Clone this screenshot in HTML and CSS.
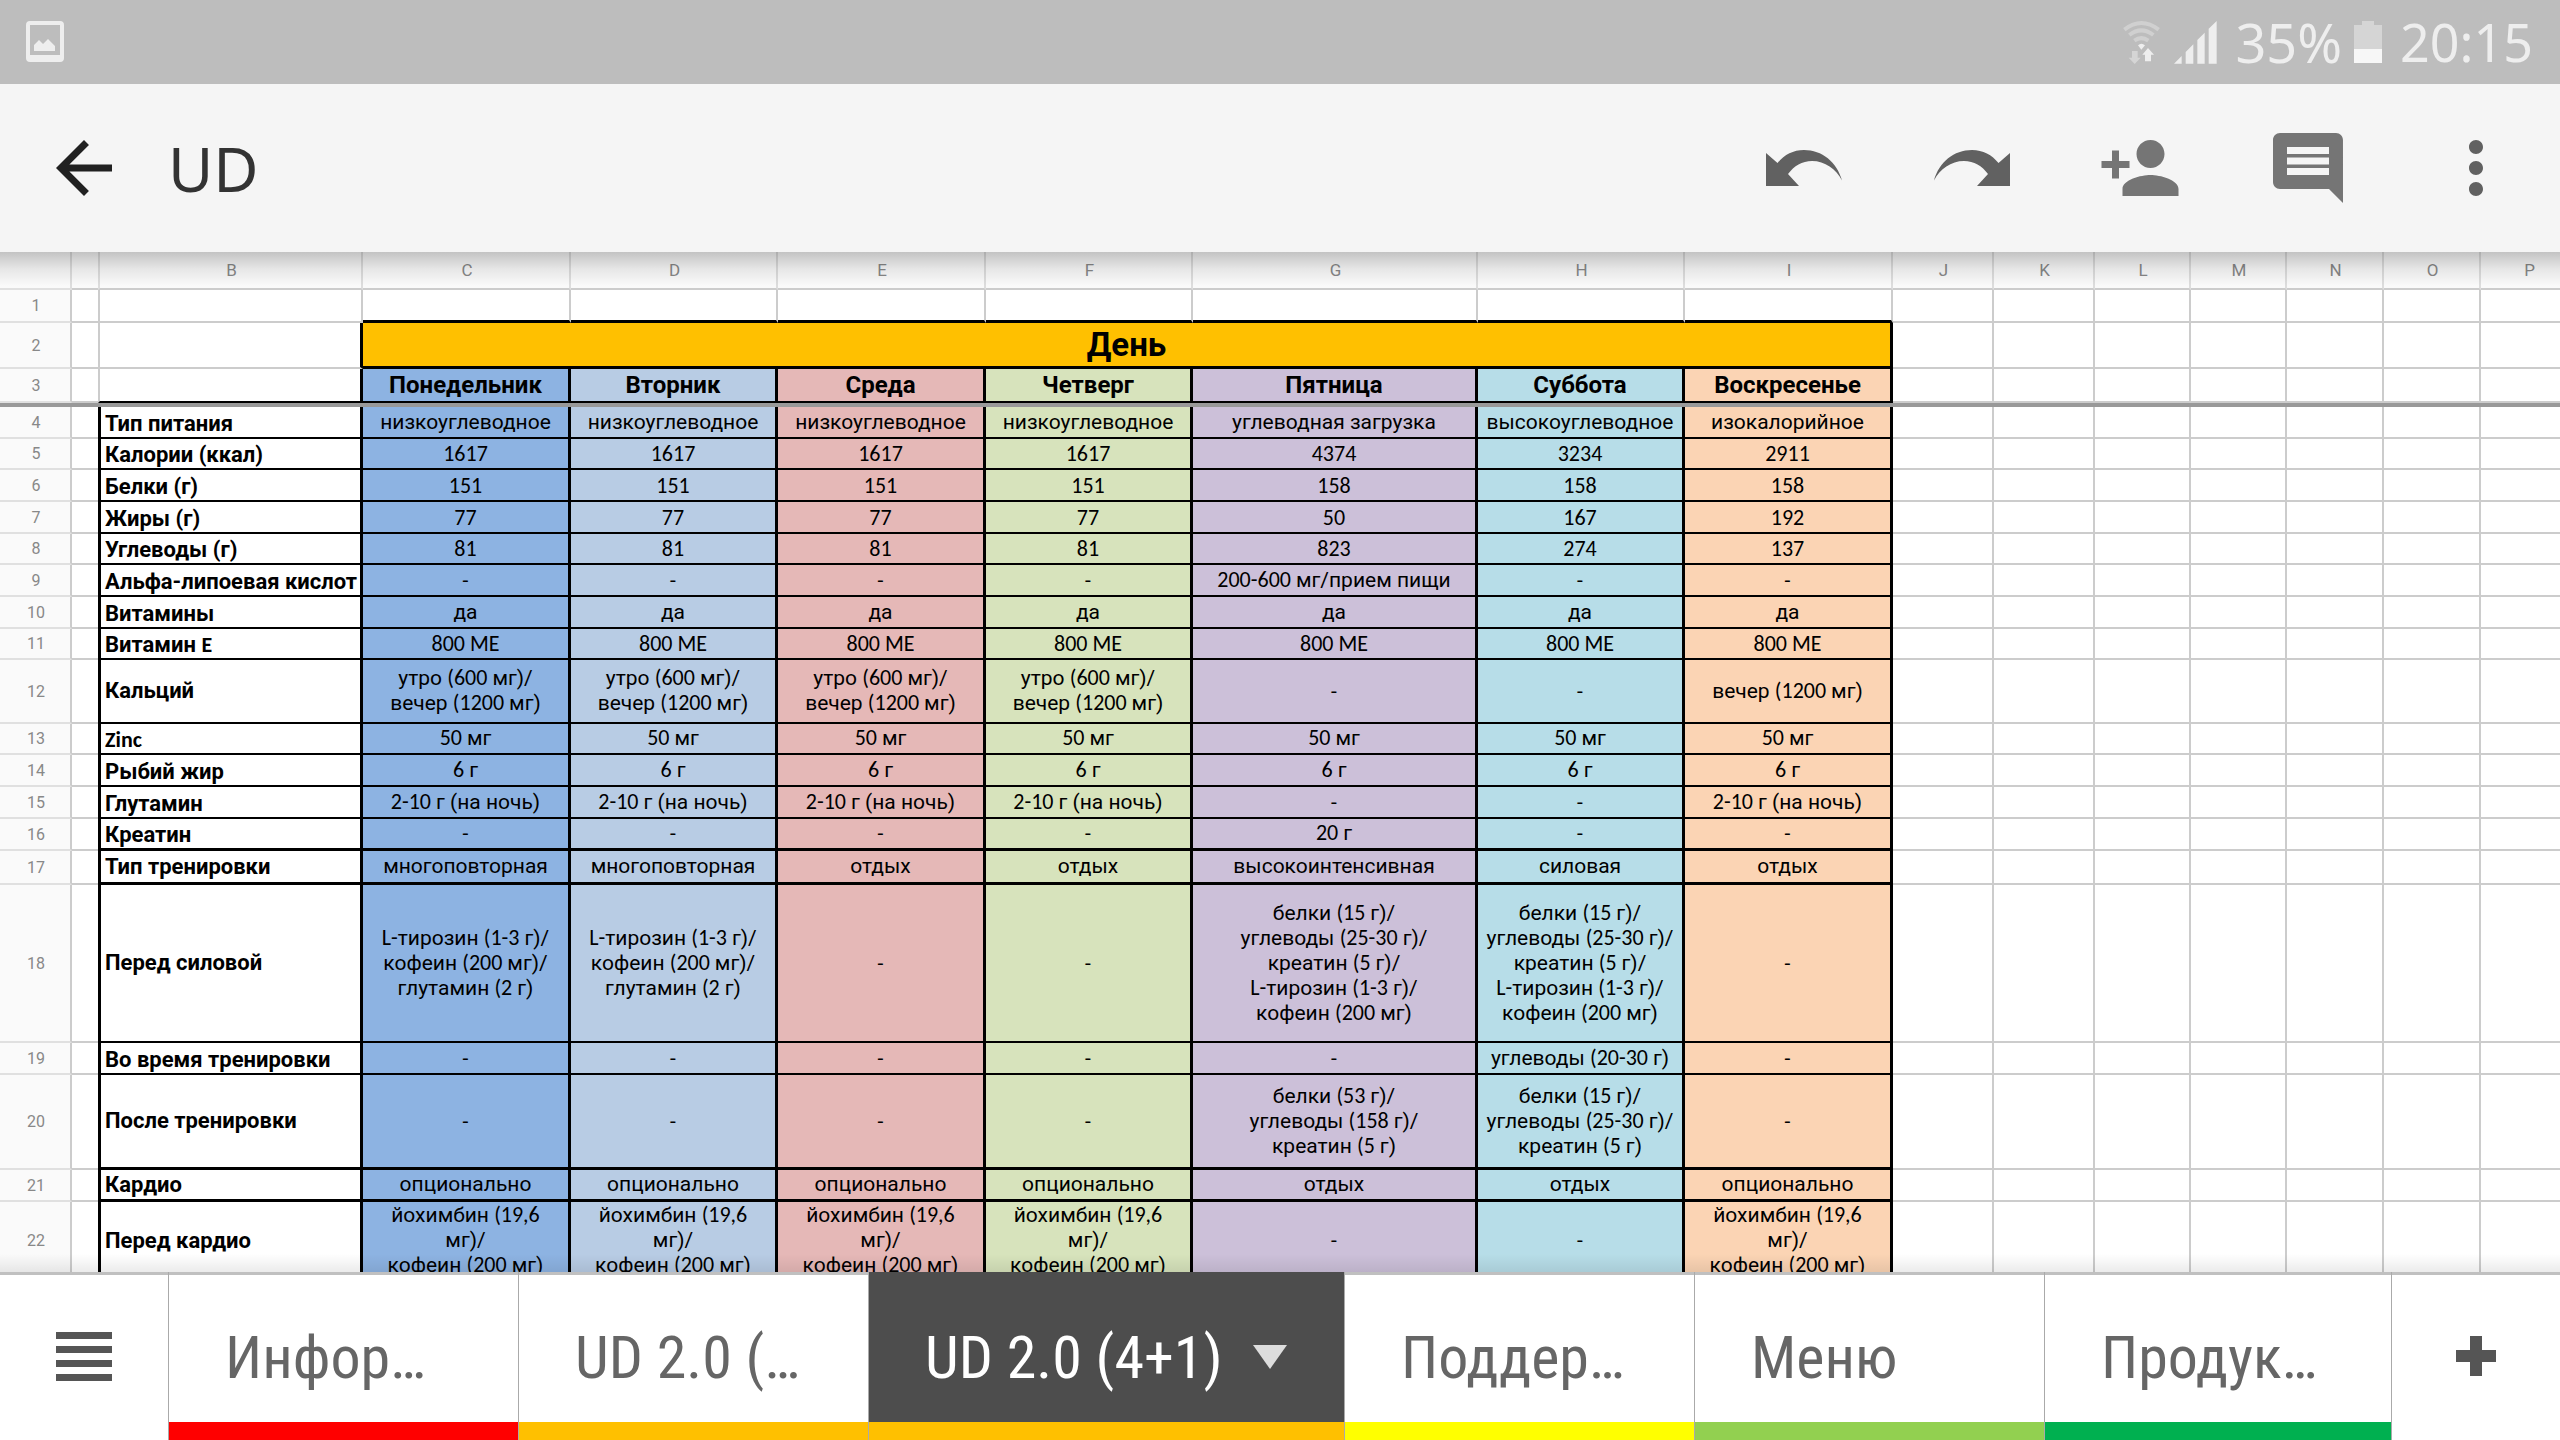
FILE: index.html
```html
<!DOCTYPE html>
<html lang="ru">
<head>
<meta charset="utf-8">
<title>UD</title>
<link rel="stylesheet" href="styles.css">
</head>
<body>
<div class="status">
  <svg class="picture" viewBox="0 0 38 42" width="38" height="42" aria-hidden="true"><path fill-rule="evenodd" d="M4 0H34a4 4 0 0 1 4 4V37a4 4 0 0 1-4 4H4a4 4 0 0 1-4-4V4A4 4 0 0 1 4 0ZM4 4V34H34V4ZM8 30V24L13 19L17 23L22 18L29 25V30Z"/></svg>
  <svg class="wifi" viewBox="126 54 117 138" width="39" height="46" aria-hidden="true">
    <g class="faint-line"><path d="M133 86Q184 46 236 86"/><path d="M148 102Q184 74 220 102"/><path d="M163 119Q184 104 205 119"/></g>
    <path class="faint" d="M156 150H173V170H182L164 189L146 170H156Z"/>
    <path d="M174 133Q184 124 195 133L184 146ZM204 141L222 161H213V181H195V161H187Z"/>
  </svg>
  <svg class="signal" viewBox="283 60 129 129" width="43" height="43" aria-hidden="true"><path d="M283 188L306 165V188ZM318 153L341 130V188H318ZM353 117L375 95V188H353ZM387 83L411 60V188H387Z"/></svg>
  <span class="percent">35%</span>
  <svg class="battery" viewBox="0 0 28 42" width="28" height="42" aria-hidden="true"><path class="faint" d="M0 4H8V0H20V4H28V28H0Z"/><path class="charge" d="M0 28H28V42H0Z"/></svg>
  <time>20:15</time>
</div>
<header class="appbar">
  <button class="icon-btn back" aria-label="Назад"><svg viewBox="0 0 24 24"><path d="M20 11H7.83l5.59-5.59L12 4l-8 8 8 8 1.41-1.41L7.83 13H20v-2z"/></svg></button>
  <h1>UD</h1>
  <button class="icon-btn dark" aria-label="Отменить"><svg viewBox="0 0 84 84"><path d="M4 27L15.500 37C22 29 31 24 42 24C60 24 75 36 80 54.500C74 43 63 35 50 35C40 35 32 40 26 48L37 60H4Z"/></svg></button>
  <button class="icon-btn dark" aria-label="Повторить"><svg viewBox="0 0 84 84"><path d="M80 27L68.500 37C62 29 53 24 42 24C24 24 9 36 4 54.500C10 43 21 35 34 35C44 35 52 40 58 48L47 60H80Z"/></svg></button>
  <button class="icon-btn" aria-label="Добавить пользователя"><svg viewBox="0 0 24 24"><path d="M15 12c2.210 0 4-1.790 4-4s-1.790-4-4-4-4 1.790-4 4 1.790 4 4 4zm-9-2V7H4v3H1v2h3v3h2v-3h3v-2H6zm9 4c-2.670 0-8 1.340-8 4v2h16v-2c0-2.660-5.330-4-8-4z"/></svg></button>
  <button class="icon-btn" aria-label="Комментарии"><svg viewBox="0 0 24 24"><path d="M21.990 4c0-1.100-.890-2-1.990-2H4c-1.100 0-2 .9-2 2v12c0 1.100.9 2 2 2h14l4 4-.010-18zM18 14H6v-2h12v2zm0-3H6V9h12v2zm0-3H6V6h12v2z"/></svg></button>
  <button class="icon-btn dark" aria-label="Ещё"><svg viewBox="0 0 24 24"><path d="M12 8c1.100 0 2-.9 2-2s-.9-2-2-2-2 .9-2 2 .9 2 2 2zm0 2c-1.100 0-2 .9-2 2s.9 2 2 2 2-.9 2-2-.9-2-2-2zm0 6c-1.100 0-2 .9-2 2s.9 2 2 2 2-.9 2-2-.9-2-2-2z"/></svg></button>
</header>
<main class="sheet">
<table>
<colgroup><col class="w-head"><col class="w-a"><col class="w-b"><col class="w-day"><col class="w-day-s"><col class="w-day"><col class="w-day-s"><col class="w-fri"><col class="w-day-s"><col class="w-day"><col class="w-j"><col class="w-j"><col class="w-l"><col class="w-l"><col class="w-n"><col class="w-n"><col class="w-n"></colgroup>
<thead>
<tr class="letters"><th></th><th></th><th>B</th><th>C</th><th>D</th><th>E</th><th>F</th><th>G</th><th>H</th><th>I</th><th>J</th><th>K</th><th>L</th><th>M</th><th>N</th><th>O</th><th>P</th></tr>
<tr class="row-1"><th class="no">1</th><td></td><td></td><td></td><td></td><td></td><td></td><td></td><td></td><td></td><td></td><td></td><td></td><td></td><td></td><td></td><td></td></tr>
<tr class="row-2"><th class="no">2</th><td></td><td class="edge"></td><th class="title" colspan="7">День</th><td></td><td></td><td></td><td></td><td></td><td></td><td></td></tr>
<tr class="row-3 plan"><th class="no">3</th><td></td><td></td><th>Понедельник</th><th>Вторник</th><th>Среда</th><th>Четверг</th><th>Пятница</th><th>Суббота</th><th>Воскресенье</th><td></td><td></td><td></td><td></td><td></td><td></td><td></td></tr>
<tr class="freeze"><td colspan="17"></td></tr>
</thead>
<tbody>
<tr class="plan"><th class="no">4</th><td></td><th>Тип питания</th><td>низкоуглеводное</td><td>низкоуглеводное</td><td>низкоуглеводное</td><td>низкоуглеводное</td><td>углеводная загрузка</td><td>высокоуглеводное</td><td>изокалорийное</td><td></td><td></td><td></td><td></td><td></td><td></td><td></td></tr>
<tr class="plan num short"><th class="no">5</th><td></td><th>Калории (ккал)</th><td>1617</td><td>1617</td><td>1617</td><td>1617</td><td>4374</td><td>3234</td><td>2911</td><td></td><td></td><td></td><td></td><td></td><td></td><td></td></tr>
<tr class="plan num"><th class="no">6</th><td></td><th>Белки (г)</th><td>151</td><td>151</td><td>151</td><td>151</td><td>158</td><td>158</td><td>158</td><td></td><td></td><td></td><td></td><td></td><td></td><td></td></tr>
<tr class="plan num"><th class="no">7</th><td></td><th>Жиры (г)</th><td>77</td><td>77</td><td>77</td><td>77</td><td>50</td><td>167</td><td>192</td><td></td><td></td><td></td><td></td><td></td><td></td><td></td></tr>
<tr class="plan num short"><th class="no">8</th><td></td><th>Углеводы (г)</th><td>81</td><td>81</td><td>81</td><td>81</td><td>823</td><td>274</td><td>137</td><td></td><td></td><td></td><td></td><td></td><td></td><td></td></tr>
<tr class="plan"><th class="no">9</th><td></td><th>Альфа-липоевая кислот</th><td>-</td><td>-</td><td>-</td><td>-</td><td><span class="n">200-600 </span>мг/прием пищи</td><td>-</td><td>-</td><td></td><td></td><td></td><td></td><td></td><td></td><td></td></tr>
<tr class="plan"><th class="no">10</th><td></td><th>Витамины</th><td>да</td><td>да</td><td>да</td><td>да</td><td>да</td><td>да</td><td>да</td><td></td><td></td><td></td><td></td><td></td><td></td><td></td></tr>
<tr class="plan num short"><th class="no">11</th><td></td><th>Витамин <span class="n">E</span></th><td>800 ME</td><td>800 ME</td><td>800 ME</td><td>800 ME</td><td>800 ME</td><td>800 ME</td><td>800 ME</td><td></td><td></td><td></td><td></td><td></td><td></td><td></td></tr>
<tr class="plan row-12 mid"><th class="no">12</th><td></td><th>Кальций</th><td>утро <span class="n">(600 </span>мг)/<br>вечер <span class="n">(1200 </span>мг)</td><td>утро <span class="n">(600 </span>мг)/<br>вечер <span class="n">(1200 </span>мг)</td><td>утро <span class="n">(600 </span>мг)/<br>вечер <span class="n">(1200 </span>мг)</td><td>утро <span class="n">(600 </span>мг)/<br>вечер <span class="n">(1200 </span>мг)</td><td>-</td><td>-</td><td>вечер <span class="n">(1200 </span>мг)</td><td></td><td></td><td></td><td></td><td></td><td></td><td></td></tr>
<tr class="plan short"><th class="no">13</th><td></td><th><span class="n">Zinc</span></th><td><span class="n">50 </span>мг</td><td><span class="n">50 </span>мг</td><td><span class="n">50 </span>мг</td><td><span class="n">50 </span>мг</td><td><span class="n">50 </span>мг</td><td><span class="n">50 </span>мг</td><td><span class="n">50 </span>мг</td><td></td><td></td><td></td><td></td><td></td><td></td><td></td></tr>
<tr class="plan"><th class="no">14</th><td></td><th>Рыбий жир</th><td><span class="n">6 </span>г</td><td><span class="n">6 </span>г</td><td><span class="n">6 </span>г</td><td><span class="n">6 </span>г</td><td><span class="n">6 </span>г</td><td><span class="n">6 </span>г</td><td><span class="n">6 </span>г</td><td></td><td></td><td></td><td></td><td></td><td></td><td></td></tr>
<tr class="plan"><th class="no">15</th><td></td><th>Глутамин</th><td><span class="n">2-10 </span>г (на ночь)</td><td><span class="n">2-10 </span>г (на ночь)</td><td><span class="n">2-10 </span>г (на ночь)</td><td><span class="n">2-10 </span>г (на ночь)</td><td>-</td><td>-</td><td><span class="n">2-10 </span>г (на ночь)</td><td></td><td></td><td></td><td></td><td></td><td></td><td></td></tr>
<tr class="plan thick"><th class="no">16</th><td></td><th>Креатин</th><td>-</td><td>-</td><td>-</td><td>-</td><td><span class="n">20 </span>г</td><td>-</td><td>-</td><td></td><td></td><td></td><td></td><td></td><td></td><td></td></tr>
<tr class="plan thick mid row-17"><th class="no">17</th><td></td><th>Тип тренировки</th><td>многоповторная</td><td>многоповторная</td><td>отдых</td><td>отдых</td><td>высокоинтенсивная</td><td>силовая</td><td>отдых</td><td></td><td></td><td></td><td></td><td></td><td></td><td></td></tr>
<tr class="plan mid row-18"><th class="no">18</th><td></td><th>Перед силовой</th><td><span class="n">L-</span>тирозин <span class="n">(1-3 </span>г)/<br>кофеин <span class="n">(200 </span>мг)/<br>глутамин <span class="n">(2 </span>г)</td><td><span class="n">L-</span>тирозин <span class="n">(1-3 </span>г)/<br>кофеин <span class="n">(200 </span>мг)/<br>глутамин <span class="n">(2 </span>г)</td><td>-</td><td>-</td><td>белки <span class="n">(15 </span>г)/<br>углеводы <span class="n">(25-30 </span>г)/<br>креатин <span class="n">(5 </span>г)/<br><span class="n">L-</span>тирозин <span class="n">(1-3 </span>г)/<br>кофеин <span class="n">(200 </span>мг)</td><td>белки <span class="n">(15 </span>г)/<br>углеводы <span class="n">(25-30 </span>г)/<br>креатин <span class="n">(5 </span>г)/<br><span class="n">L-</span>тирозин <span class="n">(1-3 </span>г)/<br>кофеин <span class="n">(200 </span>мг)</td><td>-</td><td></td><td></td><td></td><td></td><td></td><td></td><td></td></tr>
<tr class="plan"><th class="no">19</th><td></td><th>Во время тренировки</th><td>-</td><td>-</td><td>-</td><td>-</td><td>-</td><td>углеводы <span class="n">(20-30 </span>г)</td><td>-</td><td></td><td></td><td></td><td></td><td></td><td></td><td></td></tr>
<tr class="plan thick mid row-20"><th class="no">20</th><td></td><th>После тренировки</th><td>-</td><td>-</td><td>-</td><td>-</td><td>белки <span class="n">(53 </span>г)/<br>углеводы <span class="n">(158 </span>г)/<br>креатин <span class="n">(5 </span>г)</td><td>белки <span class="n">(15 </span>г)/<br>углеводы <span class="n">(25-30 </span>г)/<br>креатин <span class="n">(5 </span>г)</td><td>-</td><td></td><td></td><td></td><td></td><td></td><td></td><td></td></tr>
<tr class="plan thick mid"><th class="no">21</th><td></td><th>Кардио</th><td>опционально</td><td>опционально</td><td>опционально</td><td>опционально</td><td>отдых</td><td>отдых</td><td>опционально</td><td></td><td></td><td></td><td></td><td></td><td></td><td></td></tr>
<tr class="plan mid row-22"><th class="no">22</th><td></td><th>Перед кардио</th><td>йохимбин <span class="n">(19,6</span><br>мг)/<br>кофеин <span class="n">(200 </span>мг)</td><td>йохимбин <span class="n">(19,6</span><br>мг)/<br>кофеин <span class="n">(200 </span>мг)</td><td>йохимбин <span class="n">(19,6</span><br>мг)/<br>кофеин <span class="n">(200 </span>мг)</td><td>йохимбин <span class="n">(19,6</span><br>мг)/<br>кофеин <span class="n">(200 </span>мг)</td><td>-</td><td>-</td><td>йохимбин <span class="n">(19,6</span><br>мг)/<br>кофеин <span class="n">(200 </span>мг)</td><td></td><td></td><td></td><td></td><td></td><td></td><td></td></tr>
</tbody>
</table>
</main>
<footer class="tabs">
  <button class="tool" aria-label="Все листы"><svg viewBox="0 0 56 49" width="56" height="49"><path d="M0 0H56V7H0ZM0 14H56V21H0ZM0 28H56V35H0ZM0 42H56V49H0Z"/></svg></button>
  <nav>
    <button class="tab red"><span>Инфор…</span></button>
    <button class="tab amber"><span>UD 2.0 (…</span></button>
    <button class="tab amber active"><span>UD 2.0 (4+1)</span><svg viewBox="0 0 34 24" width="34" height="24" aria-hidden="true"><path d="M0 0H34L17 24Z"/></svg></button>
    <button class="tab yellow"><span>Поддер…</span></button>
    <button class="tab lime"><span>Меню</span></button>
    <button class="tab green"><span>Продук…</span></button>
  </nav>
  <button class="tool" aria-label="Добавить лист"><svg viewBox="0 0 40 40" width="40" height="40"><path d="M14 0H26V14H40V26H26V40H14V26H0V14H14Z"/></svg></button>
</footer>
</body>
</html>
```
FILE: styles.css
```css
* { box-sizing: border-box; }
body {
  margin: 0;
  height: 100vh;
  display: flex;
  flex-direction: column;
  overflow: hidden;
  background: #fff;
  font-family: Roboto, "Liberation Sans", sans-serif;
}
button { border: 0; margin: 0; padding: 0; background: none; font: inherit; color: inherit; }

/* phone status bar */
.status {
  flex: none;
  display: flex;
  align-items: center;
  height: 84px;
  padding: 0 27px 0 26px;
  background: #bdbdbd;
  color: #eee;
  fill: #eee;
  font-family: "Noto Sans", sans-serif;
  font-size: 52px;
  line-height: 84px;
}
.wifi { margin-left: auto; }
.signal { margin-left: 13px; }
.percent { margin-left: 18px; font-size: 54px; }
.battery { margin-left: 12px; }
.status time { margin-left: 18px; }
.faint { fill: #d5d5d5; }
.faint-line { fill: none; stroke: #d0d0d0; stroke-width: 12px; }
.charge { fill: #f7f7f7; }

/* document toolbar */
.appbar {
  flex: none;
  display: flex;
  align-items: center;
  height: 168px;
  background: #f5f5f5;
}
.appbar h1 {
  flex: 1;
  margin: 0;
  font: 400 62px/84px "Noto Sans", sans-serif;
  color: #333;
}
.icon-btn { width: 168px; height: 168px; display: grid; place-items: center; fill: #757575; }
.icon-btn svg { width: 84px; height: 84px; }
.icon-btn.dark { fill: #616161; }
.icon-btn.back { fill: #212121; }

/* spreadsheet */
.sheet { flex: 1; min-height: 0; overflow: hidden; position: relative; }
.sheet::before, .sheet::after {
  content: "";
  position: absolute;
  left: 0;
  right: 0;
  pointer-events: none;
}
.sheet::before { top: 0; height: 34px; background: linear-gradient(rgba(0,0,0,.22), rgba(0,0,0,.08) 50%, transparent); }
.sheet::after { bottom: 0; height: 18px; background: linear-gradient(transparent, rgba(0,0,0,.08)); }
table {
  table-layout: fixed;
  width: 2578px;
  border-collapse: separate;
  border-spacing: 0;
  font-size: 21px;
  line-height: 25px;
}
.w-head { width: 72px; }
.w-a { width: 26px; }
.w-b { width: 265px; }
.w-day { width: 208px; }
.w-day-s { width: 207px; }
.w-fri { width: 285px; }
.w-j { width: 101px; }
.w-l { width: 96px; }
.w-n { width: 97px; }
th, td {
  padding: 0;
  overflow: hidden;
  white-space: nowrap;
  text-align: center;
  vertical-align: middle;
  border: solid #ccc;
  border-width: 0 2px 2px 0;
}
tr > :nth-child(2) { border-right: 0; }
tr > :nth-child(3) { border-left: 2px solid #ccc; }
.letters th, .no {
  padding-left: 2px;
  background: #fafafa;
  color: #888;
  font-size: 17px;
  font-weight: 400;
}
.letters { height: 38px; }
.letters th { border-right-color: #ddd; border-left-color: #ddd; }
.letters th:first-child { border-bottom-color: #e0e0e0; }
.no { border-bottom-color: #e0e0e0; font-size: 16px; }
.row-1 { height: 33px; }
.row-1 td:nth-child(n+4):nth-child(-n+10) { border-bottom: 3px solid #000; }
.row-2 { height: 46px; }
.row-2 .edge, .row-2 .title { border-right: 3px solid #000; }
.title { background: #ffc000; border-bottom: 3px solid #000; font-size: 33px; line-height: 38px; }
.freeze { height: 4px; line-height: 0; }
.freeze td { background: #999; border: 0; }

.plan { height: 32px; }
.plan.short { height: 31px; }
.plan > :nth-child(n+3):nth-child(-n+10) { border-right: 3px solid #000; border-bottom: 2px solid #000; }
.plan.thick > :nth-child(n+3):nth-child(-n+10) { border-bottom-width: 3px; }
.plan > th:nth-child(3) {
  border-left: 3px solid #000;
  text-align: left;
  padding: 0 0 1px 4px;
  vertical-align: bottom;
  font-size: 22px;
}
.plan.mid > th:nth-child(3) { vertical-align: middle; }
.plan.row-3 { height: 34px; }
.row-3 th { font-size: 24px; }
.row-3 .no { font-size: 16px; }
.row-12 { height: 64px; }
.row-17 { height: 34px; }
.row-18 { height: 158px; }
.row-20 { height: 95px; }
.row-22 { height: 79px; }
.plan > :nth-child(4) { background: #8db3e2; }
.plan > :nth-child(5) { background: #b8cce4; }
.plan > :nth-child(6) { background: #e5b8b7; }
.plan > :nth-child(7) { background: #d7e3bc; }
.plan > :nth-child(8) { background: #ccc0d9; }
.plan > :nth-child(9) { background: #b7dde8; }
.plan > :nth-child(10) { background: #fbd4b4; }
.n, .num td { font-family: Carlito, Lato, sans-serif; font-size: 22px; }
.n { line-height: 0; }

/* sheet tabs */
.tabs {
  flex: none;
  display: flex;
  height: 168px;
  background: #fff;
  color: #666;
  font-family: "Roboto Condensed", Roboto, sans-serif;
  font-size: 60px;
}
.tool { flex: none; width: 168px; display: grid; place-items: center; fill: #555; box-shadow: inset 0 3px #c0c0c0; }
.tabs nav { flex: 1; min-width: 0; display: flex; overflow: hidden; }
.tab {
  --strip: #fff;
  flex: none;
  width: 350px;
  padding: 2px 0 0 56px;
  display: flex;
  align-items: center;
  gap: 30px;
  white-space: nowrap;
  border-left: 1px solid #aaa;
  box-shadow: inset 0 -18px var(--strip), inset 0 3px #c0c0c0;
}
.tab:last-child { flex: 1; border-right: 1px solid #aaa; }
.tab.active {
  width: 476px;
  color: #fff;
  fill: #ddd;
  background: #4d4d4d;
  box-shadow: inset 0 -18px var(--strip);
}
.red { --strip: #f00; }
.amber { --strip: #ffc000; }
.yellow { --strip: #ff0; }
.lime { --strip: #92d050; }
.green { --strip: #00b050; }
```
